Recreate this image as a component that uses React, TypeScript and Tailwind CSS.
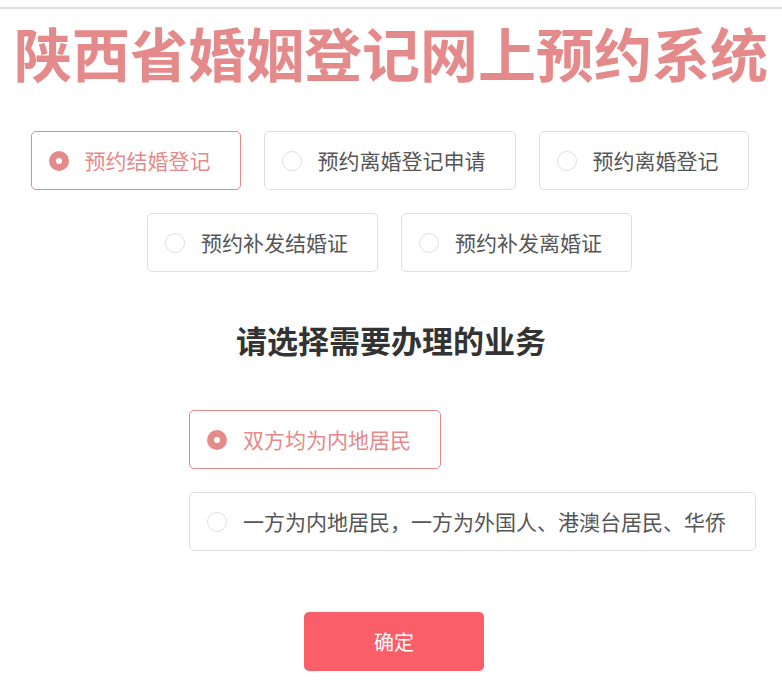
import { useState } from "react";

const cjk = "font-['Noto_Sans_CJK_SC','Noto_Sans',sans-serif]";

const services = ["预约结婚登记", "预约离婚登记申请", "预约离婚登记", "预约补发结婚证", "预约补发离婚证"];
const parties = ["双方均为内地居民", "一方为内地居民，一方为外国人、港澳台居民、华侨"];

function Option({ label, active, onClick }: { label: string; active: boolean; onClick: () => void }) {
  return (
    <div
      onClick={onClick}
      className={`flex h-[59px] cursor-pointer items-center rounded-[5px] border bg-white pl-[17px] pr-[29px] ${
        active ? "border-[#e48a8a] text-[#e48a8a]" : "border-[#dcdfe6] text-[#555]"
      }`}
    >
      {active ? (
        <span className="flex h-[20px] w-[20px] items-center justify-center rounded-full bg-[#e48a8a]">
          <span className="h-[6px] w-[6px] rounded-full bg-white" />
        </span>
      ) : (
        <span className="h-[20px] w-[20px] rounded-full border border-[#dcdfe6] bg-white" />
      )}
      <span className="ml-[16px] whitespace-nowrap text-[21px] leading-none">{label}</span>
    </div>
  );
}

export default function App() {
  const [service, setService] = useState(0);
  const [party, setParty] = useState(0);

  return (
    <div className={`min-h-[686px] w-[782px] overflow-hidden bg-white ${cjk}`}>
      <div className="mt-[7px] h-[2px] bg-[#dddddd]" />

      <h1 className="mt-[14px] whitespace-nowrap text-center text-[58px] font-bold leading-[58px] text-[#e48a8a]">
        陕西省婚姻登记网上预约系统
      </h1>

      <div className="mt-[50px] flex flex-wrap justify-center gap-[23px] pr-[3px]">
        {services.slice(0, 3).map((s, i) => (
          <Option key={s} label={s} active={service === i} onClick={() => setService(i)} />
        ))}
      </div>
      <div className="mt-[23px] flex justify-center gap-[23px] pr-[3px]">
        {services.slice(3).map((s, i) => (
          <Option key={s} label={s} active={service === i + 3} onClick={() => setService(i + 3)} />
        ))}
      </div>

      <h2 className="mt-[52px] text-center text-[31px] font-bold leading-[31px] text-[#333]">请选择需要办理的业务</h2>

      <div className="mt-[55px] flex flex-col items-start gap-[23px] pl-[189px]">
        {parties.map((p, i) => (
          <Option key={p} label={p} active={party === i} onClick={() => setParty(i)} />
        ))}
      </div>

      <div className="mt-[61px] flex pl-[304px]">
        <button className="h-[59px] w-[180px] rounded-[5px] bg-[#fa5f69] text-[20px] text-white">确定</button>
      </div>
    </div>
  );
}
